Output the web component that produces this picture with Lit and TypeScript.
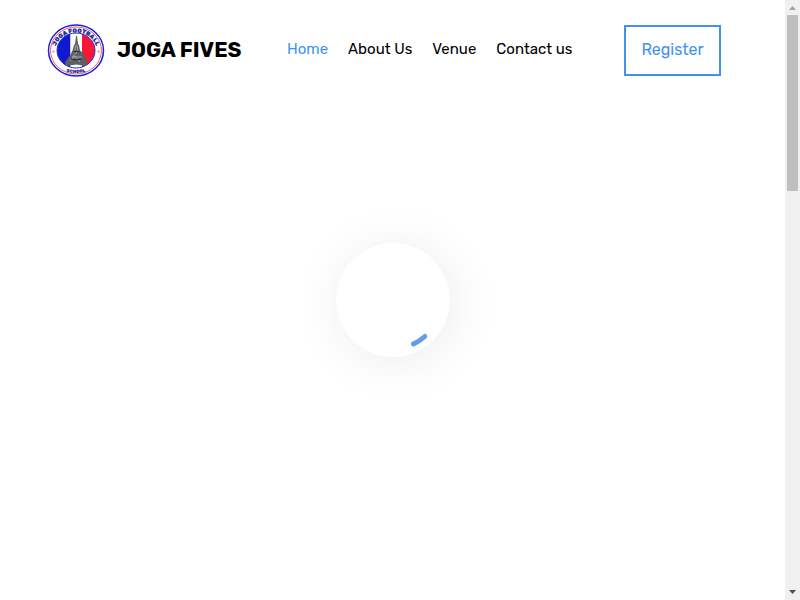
import { LitElement, html, css } from "lit";
import { customElement } from "lit/decorators.js";

@customElement("joga-crest")
class JogaCrest extends LitElement {
  static styles = css`
    :host { display: block; flex: none; width: 58px; height: 54px; }
    svg { display: block; width: 100%; height: 100%; }
    text { font-family: Rubik, Roboto, sans-serif; font-weight: 900; fill: #2a2f9c; }
  `;
  render() {
    return html`<svg viewBox="0 0 116 108" role="img" aria-label="Joga Football School">
      <defs>
        <clipPath id="disc"><ellipse cx="58" cy="55" rx="38" ry="35" /></clipPath>
        <path id="upper" d="M16 58 A42 39 0 0 1 100 58" />
        <path id="lower" d="M30 95 Q58 105 86 95" />
      </defs>
      <ellipse cx="58" cy="55" rx="55" ry="51" fill="#fff" stroke="#1822d8" stroke-width="3" />
      <ellipse cx="58" cy="55" rx="51" ry="47" fill="none" stroke="#f4596a" stroke-width="2" />
      <g clip-path="url(#disc)">
        <rect x="18" y="18" width="29" height="74" fill="#1018d0" />
        <rect x="47" y="18" width="23" height="74" fill="#fff" />
        <rect x="70" y="18" width="30" height="74" fill="#fa1636" />
      </g>
      <ellipse cx="58" cy="55" rx="38" ry="35" fill="none" stroke="#2530c8" stroke-width="2" />
      <path d="M58 26 L60 26 L62 42 L64 44 L66 55 L73 61 L81 78 L77 86 L59 83 L38 86 L36 78 L46 65 L51 55 L54 44 L56 42 Z" fill="#5c6064" />
      <path d="M58 44 L55 58 M60 44 L62 56 L51 68 M50 68 L70 68 M46 76 L56 66 L66 78" fill="none" stroke="#a4a6a8" stroke-width="2" />
      <path d="M53 57 L65 57 M48 72 L57 74 L69 72" fill="none" stroke="#252a32" stroke-width="2" />
      <text font-size="12"><textPath href="#upper" startOffset="50%" text-anchor="middle">JOGA FOOTBALL</textPath></text>
      <text font-size="9"><textPath href="#lower" startOffset="50%" text-anchor="middle">SCHOOL</textPath></text>
      <circle cx="13" cy="57" r="2" fill="#e8707c" /><circle cx="103" cy="57" r="2" fill="#e8707c" />
    </svg>`;
  }
}

@customElement("app-root")
class AppRoot extends LitElement {
  static styles = css`
    :host {
      display: flex; min-height: 100vh; background: #fff; color: #000;
      font-family: Rubik, Roboto, sans-serif; font-size: 15px; line-height: 24px;
    }
    .page { flex: 1; min-width: 0; position: relative; }
    .header { display: flex; align-items: center; height: 100px; padding: 0 64px 0 47px; box-sizing: border-box; }
    a { color: inherit; text-decoration: none; white-space: nowrap; }
    .brand { display: flex; align-items: center; gap: 12px; width: 240px; flex: none; }
    .name { font-size: 21px; font-weight: 700; }
    .nav { display: flex; gap: 20px; padding-bottom: 2px; }
    .nav .active { color: #3e91f5; }
    .register {
      margin-left: auto; box-sizing: border-box; min-width: 97px; height: 51px; padding: 0 14px;
      border: 2px solid #4291f0; background: #fff; color: #4291f0; font: inherit; font-size: 16px;
    }
    .loader {
      position: absolute; inset: 0; margin: auto; width: 114px; height: 114px;
      border-radius: 50%; background: #fff; box-shadow: 4px 4px 52px rgba(0, 0, 0, 0.08);
    }
    .loader svg { display: block; width: 100%; height: 100%; }
    .scroll {
      flex: none; width: 15px; background: #f0f0f0; display: flex; flex-direction: column;
      align-items: center;
    }
    .arrow { display: block; width: 15px; height: 15px; flex: none; }
    .thumb { width: 11px; height: 176px; background: #bfbfbf; margin-bottom: auto; }
  `;
  render() {
    return html`
      <main class="page">
        <header class="header">
          <a class="brand" href="#"><joga-crest></joga-crest><span class="name">JOGA FIVES</span></a>
          <nav class="nav">
            <a class="active" href="#">Home</a>
            <a href="#about">About Us</a>
            <a href="#venue">Venue</a>
            <a href="#contact">Contact us</a>
          </nav>
          <button class="register" type="button">Register</button>
        </header>
        <div class="loader" role="status" aria-label="Loading">
          <svg viewBox="0 0 114 114"><path d="M77.500 101 A48.600 48.600 0 0 0 88.800 93.500" fill="none" stroke="#629deb" stroke-width="5" stroke-linecap="round" /></svg>
        </div>
      </main>
      <div class="scroll" aria-hidden="true">
        <svg class="arrow" viewBox="0 0 15 15"><path d="M4 10 L7.500 6 L11 10 Z" fill="#a3a3a3" /></svg>
        <div class="thumb"></div>
        <svg class="arrow" viewBox="0 0 15 15"><path d="M4 5 L11 5 L7.500 9 Z" fill="#505050" /></svg>
      </div>
    `;
  }
}
